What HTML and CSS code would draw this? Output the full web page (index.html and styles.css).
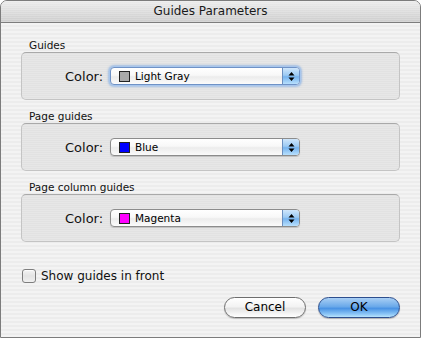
FILE: index.html
```html
<!DOCTYPE html>
<html>
<head>
<meta charset="utf-8">
<link rel="stylesheet" href="styles.css">
</head>
<body>
<div class="window">
  <div class="titlebar">Guides Parameters</div>
  <div class="content">
    <div class="group first">
      <div class="group-label">Guides</div>
      <div class="group-box">
        <span class="field-label">Color:</span>
        <div class="popup focused">
          <span class="swatch" style="background:#a9a9a9"></span>
          <span class="popup-text">Light Gray</span>
          <span class="popup-arrows"><svg width="7" height="11" viewBox="0 0 7 11"><path d="M3.5 1 L6.5 4.5 L0.5 4.5 Z M3.5 10 L6.5 6.5 L0.5 6.5 Z" fill="#000"/></svg></span>
        </div>
      </div>
    </div>
    <div class="group">
      <div class="group-label">Page guides</div>
      <div class="group-box">
        <span class="field-label">Color:</span>
        <div class="popup">
          <span class="swatch" style="background:#0000ff"></span>
          <span class="popup-text">Blue</span>
          <span class="popup-arrows"><svg width="7" height="11" viewBox="0 0 7 11"><path d="M3.5 1 L6.5 4.5 L0.5 4.5 Z M3.5 10 L6.5 6.5 L0.5 6.5 Z" fill="#000"/></svg></span>
        </div>
      </div>
    </div>
    <div class="group">
      <div class="group-label">Page column guides</div>
      <div class="group-box">
        <span class="field-label">Color:</span>
        <div class="popup">
          <span class="swatch" style="background:#ff00ff"></span>
          <span class="popup-text">Magenta</span>
          <span class="popup-arrows"><svg width="7" height="11" viewBox="0 0 7 11"><path d="M3.5 1 L6.5 4.5 L0.5 4.5 Z M3.5 10 L6.5 6.5 L0.5 6.5 Z" fill="#000"/></svg></span>
        </div>
      </div>
    </div>
    <label class="checkrow">
      <span class="checkbox"></span>
      <span class="check-text">Show guides in front</span>
    </label>
    <div class="buttons">
      <div class="btn cancel">Cancel</div>
      <div class="btn ok">OK</div>
    </div>
  </div>
</div>
</body>
</html>
```

FILE: styles.css
```css
html, body {
  margin: 0;
  padding: 0;
}
body {
  width: 421px;
  height: 338px;
  overflow: hidden;
  background: #ffffff;
  font-family: "DejaVu Sans", "Liberation Sans", sans-serif;
  color: #000;
}
.window {
  box-sizing: border-box;
  width: 421px;
  height: 338px;
  border: 1px solid #7c7c7c;
  border-radius: 7px 7px 0 0;
  overflow: hidden;
  display: flex;
  flex-direction: column;
  background: repeating-linear-gradient(to bottom, #ececec 0px, #ececec 2px, #f3f3f3 2px, #f3f3f3 4px);
}
.titlebar {
  height: 21px;
  border-bottom: 1px solid #7d7d7d;
  background:
    repeating-linear-gradient(to bottom, rgba(255,255,255,0.18) 0px, rgba(255,255,255,0.18) 1px, rgba(0,0,0,0) 1px, rgba(0,0,0,0) 2px),
    linear-gradient(to bottom, #ececec 0%, #dcdcdc 50%, #cdcdcd 100%);
  text-align: center;
  font-size: 12px;
  line-height: 21px;
  color: #1a1a1a;
}
.content {
  flex: 1;
  display: flex;
  flex-direction: column;
  padding: 15px 20px 0 20px;
}
.group {
  margin-top: 9px;
}
.group.first {
  margin-top: 0;
}
.group-label {
  font-size: 10.5px;
  line-height: 14px;
  padding-left: 8px;
  color: #111;
}
.group-box {
  box-sizing: border-box;
  height: 48px;
  border: 1px solid #c4c4c4;
  border-top-color: #a9a9a9;
  border-radius: 5px;
  background: repeating-linear-gradient(to bottom, #e2e2e2 0px, #e2e2e2 1px, #e7e7e7 1px, #e7e7e7 2px);
  display: flex;
  align-items: center;
  padding-left: 43px;
}
.field-label {
  font-size: 13px;
  width: 45px;
  color: #111;
}
.popup {
  box-sizing: border-box;
  width: 190px;
  height: 18px;
  border: 1px solid #8c8c8c;
  border-radius: 4px;
  background: linear-gradient(to bottom, #ffffff 0%, #f8f8f8 45%, #ececec 55%, #fbfbfb 100%);
  display: flex;
  align-items: center;
  padding-left: 8px;
  position: relative;
  box-shadow: 0 1px 1px rgba(0,0,0,0.15);
}
.popup.focused {
  border-color: #6f92c6;
  box-shadow: 0 0 0 1px #a8c6ec, 0 0 2px 2px rgba(110,160,225,0.55);
}
.swatch {
  box-sizing: border-box;
  width: 11px;
  height: 11px;
  border: 1px solid #222;
  margin-right: 5px;
}
.popup-text {
  font-size: 10.5px;
  flex: 1;
  color: #000;
}
.popup-arrows {
  box-sizing: border-box;
  width: 17px;
  height: 16px;
  border-left: 1px solid #6b8fbf;
  border-radius: 0 3px 3px 0;
  background: linear-gradient(to bottom, #cfe6fb 0%, #9ccaf3 45%, #76b3ee 55%, #b8e0fd 100%);
  display: flex;
  align-items: center;
  justify-content: center;
}
.checkrow {
  display: flex;
  align-items: center;
  height: 14px;
  margin-top: 27px;
  padding-left: 1px;
}
.checkbox {
  box-sizing: border-box;
  width: 14px;
  height: 14px;
  border: 1px solid #7e7e7e;
  border-radius: 3px;
  background: linear-gradient(to bottom, #f4f4f4 0%, #e4e4e4 50%, #f0f0f0 100%);
  box-shadow: inset 0 1px 1px rgba(255,255,255,0.8);
  margin-right: 5px;
}
.check-text {
  font-size: 12px;
  color: #111;
}
.buttons {
  display: flex;
  justify-content: flex-end;
  gap: 12px;
  margin-top: 14px;
}
.btn {
  box-sizing: border-box;
  width: 82px;
  height: 21px;
  border-radius: 11px;
  font-size: 12px;
  line-height: 19px;
  text-align: center;
  color: #000;
}
.cancel {
  border: 1px solid #6e6e6e;
  background: linear-gradient(to bottom, #ffffff 0%, #f3f3f3 45%, #e3e3e3 55%, #f6f6f6 85%, #ffffff 100%);
  box-shadow: 0 1px 1px rgba(0,0,0,0.2);
}
.ok {
  border: 1px solid #2d4f8e;
  background: linear-gradient(to bottom, #a9cff4 0%, #6aa9ea 45%, #4a93e4 55%, #8cc6f6 85%, #b8e4fd 100%);
  box-shadow: 0 1px 1px rgba(0,0,0,0.25);
}
```
